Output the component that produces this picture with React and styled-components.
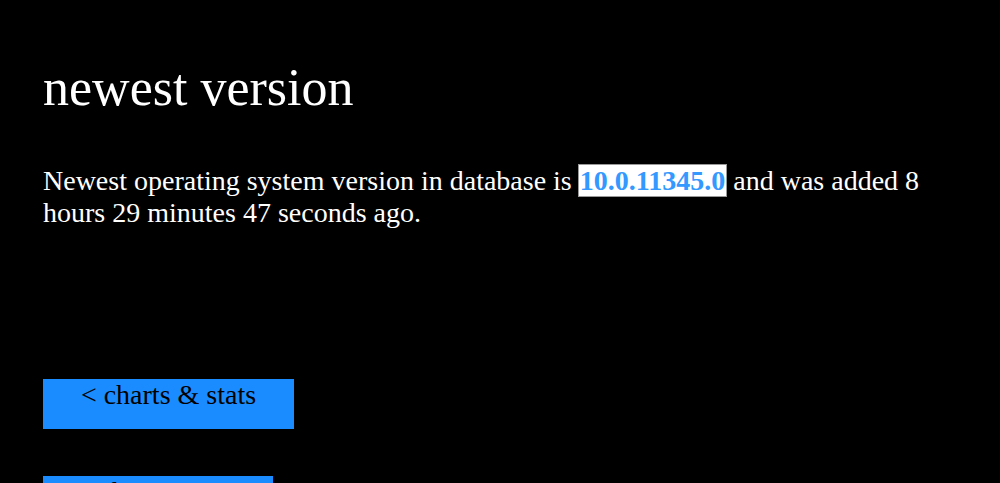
import React from 'react';
import styled, { createGlobalStyle } from 'styled-components';

const GlobalStyle = createGlobalStyle`
  html, body {
    margin: 0;
    background: #000;
    color: #fff;
    font-family: "Liberation Serif", "Times New Roman", serif;
  }
`;

const Page = styled.main`
  padding: 58px 43px 0;
`;

const Title = styled.h1`
  margin: 0;
  font-size: 52px;
  font-weight: normal;
  line-height: 60px;
`;

const Text = styled.p`
  margin: 47px 0 0;
  font-size: 28px;
  line-height: 32px;
  max-width: 900px;
`;

const Version = styled.span`
  background: #fff;
  color: #3399ff;
  font-weight: bold;
  padding: 0 1px;
  outline: 1px solid #999;
`;

const Nav = styled.nav`
  display: flex;
  flex-direction: column;
  align-items: flex-start;
  gap: 47px;
  margin-top: 150px;
`;

const Button = styled.a`
  display: block;
  box-sizing: border-box;
  width: ${p => p.$w}px;
  height: 50px;
  background: #1a8cff;
  color: #000;
  font-size: 28px;
  line-height: 32px;
  text-align: center;
  text-decoration: none;
`;

export default function App() {
  return (
    <>
      <GlobalStyle />
      <Page>
        <Title>newest version</Title>
        <Text>
          Newest operating system version in database is <Version>10.0.11345.0</Version> and was added 8 hours 29 minutes 47 seconds ago.
        </Text>
        <Nav>
          <Button $w={251} href="#">&lt; charts &amp; stats</Button>
          <Button $w={230} href="#">&lt; homepage</Button>
        </Nav>
      </Page>
    </>
  );
}
